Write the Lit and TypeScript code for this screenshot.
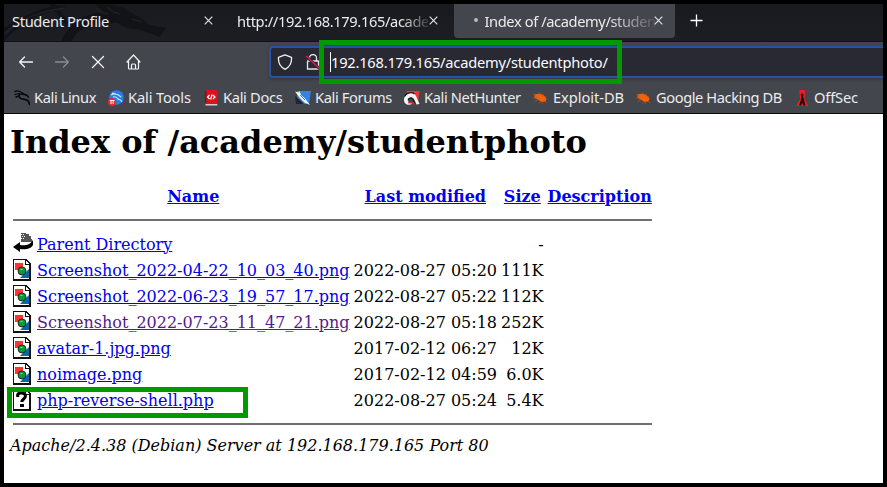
import { LitElement, html, svg, css } from "lit";
import { customElement } from "lit/decorators.js";

const cross = html`<svg class="x" width="9" height="9" viewBox="0 0 9 9"><path d="M.7.7l7.6 7.6M8.3.7L.7 8.3" stroke="#e8e8ea" stroke-width="1.1" fill="none"/></svg>`;

const back = (cls: string) => html`<svg class=${cls} width="16" height="16" viewBox="0 0 16 16"><path d="M14.500 8H1.600M6.500 3L1.600 8l4.900 5" fill="none" stroke="#f4f4f6" stroke-width="1.300" stroke-linecap="round" stroke-linejoin="round"/></svg>`;

const bug = svg`<g fill="#f0620e"><path d="M1.500 4.500l5-1 4 1.500 3 3.500-1 3-4 .5-4-2.500L1.500 8z"/><path d="M0 3.500l3 2M0 8l4-.5M1.500 11.500l4-2M6 13.500l1.500-2M7 2L6 5M10 3.500l-.5 3M13.500 6l-2 1M14 13l-2-2M9 14l.5-3" stroke="#b8521b" stroke-width=".7"/></g>`;

const marks: Record<string, unknown> = {
  linux: svg`<g fill="none" stroke="#08090b" stroke-linecap="round"><path d="M.5 1.500C4 0 7 1.700 9.500 3.700L13 5.500M1 4.500c3-1.500 5-.8 7.500 0" stroke-width="1.200"/><path d="M5.500 4c-1 4 1 5 4 5.200 3.500.2 5.500 1.600 6 5.300" stroke-width="1.700"/><path d="M8 4l4.500 1 2 2M2 7l3-1" stroke-width="1.500"/></g>`,
  tools: svg`<circle cx="8.500" cy="7.500" r="7.300" fill="#267df0"/><path d="M3 5c4-2 7-1 10 2M5 7c3-1 4 1 5 2s3 0 4 3M4 3l4 1" fill="none" stroke="#d9eaff" stroke-width="1.100"/><circle cx="4" cy="12" r="4" fill="#e82732"/><path d="M1.800 10.500h4.700M3 10.500v3.500M5.200 10.500v3.500" stroke="#fff" stroke-width="1"/>`,
  docs: svg`<path d="M3 0h11.300v15.500H2V1z" fill="#d9141a"/><path d="M2 1h1.500v12H2z" fill="#8d0c12"/><path d="M2.500 14H14.300v1.500H2.500z" fill="#ccc"/><path d="M6.500 5l-2 2 2 2M10 5l2 2-2 2M9 4.500L7.700 9.500" fill="none" stroke="#fff" stroke-width="1.200"/>`,
  forums: svg`<path d="M2 1h14l-2 13H3z" fill="#2f83ed"/><path d="M0 6l5 4 4 4H1z" fill="#23252b"/><path d="M0 1.500l3.500 1 1-1.500 1.500 4 4 3.500 5 6.500-5.500-2.500-5-5z" fill="#f4f7fc"/><path d="M5 5l5 5" stroke="#555" stroke-width=".8"/>`,
  hunter: svg`<path d="M2 1h13.500L14 13z" fill="#f0343a"/><path d="M0 10C0 3 9 0 12 6l3.500 8-3 .5L10 9C8 6 4 7 3.700 10c0 2 2.300 2.500 4.300 2v2c-4 2-8 0-8-4z" fill="#f4f4f4"/><path d="M.5 6.500C3 2 8 2 10.500 4M4 9.500c2-2 4-2 5 0l2.500 5" fill="none" stroke="#17181b" stroke-width="1.200"/><path d="M4.300 12.500c3 1 4-1 7 2" fill="none" stroke="#d82338" stroke-width="1.500"/>`,
  bug,
  offsec: svg`<path d="M5.300 0h6l-.8 9.500 3.800 6.500H2l4-6.500z" fill="#ed1d24"/><path d="M8.200 3.500c1.800 0 1.200 2 1 3.500l.8 3.500 1.500 5H9.200l-1-3-1 3H5l1.800-5L7.200 7c-.3-1.500-1-3.500 1-3.500z" fill="#1d0709"/>`,
};

const bookmarks: [string, string, number][] = [
  ["linux", "Kali Linux", -0.4], ["tools", "Kali Tools", -0.15], ["docs", "Kali Docs", -0.32], ["forums", "Kali Forums", -0.36],
  ["hunter", "Kali NetHunter", -0.37], ["bug", "Exploit-DB", -0.05], ["bug", "Google Hacking DB", -0.42], ["offsec", "OffSec", -0.15],
];

const page = svg`<g shape-rendering="crispEdges"><path d="M0 0h13l5 5v17H0z" fill="#111"/><path d="M1 1h11v5h4v14H1z" fill="#fff"/><path d="M13 2v3h3z" fill="#fff"/></g>`;
const fileIcons: Record<string, unknown> = {
  back: svg`<path d="M8 0h5v1h3v2h2v3h1v3H8z" fill="#555"/><path d="M8 1h1v1H8zM10 1h1v1h-1zM9 3h1v1H9zM11 3h1v1h-1zM8 5h1v1H8zM10 5h1v1h-1z" fill="#fff"/><path d="M0 14l7-5v3c5 1 10 0 13-5v5c-2 4-8 5-13 4v3z" fill="#000"/>`,
  image: svg`${page}<path d="M2 4h8v7H2z" fill="#f33"/><path d="M16 10v9H7z" fill="#0867aa"/><circle cx="9" cy="12" r="4" fill="#079b3a" stroke="#111" stroke-width=".8"/><path d="M7.500 10.500h2" stroke="#8fdf9f"/>`,
  unknown: svg`${page}<path d="M4.700 8V5.800C5.500 3.300 12.500 3.300 12.500 7c0 3-3.700 3-3.700 6" fill="none" stroke="#000" stroke-width="3"/><path d="M7 15h4v3H7z"/>`,
};

const files = [
  ["back", "Parent Directory", "", "-"],
  ["image", "Screenshot_2022-04-22_10_03_40.png", "2022-08-27 05:20", "111K"],
  ["image", "Screenshot_2022-06-23_19_57_17.png", "2022-08-27 05:22", "112K"],
  ["image", "Screenshot_2022-07-23_11_47_21.png", "2022-08-27 05:18", "252K"],
  ["image", "avatar-1.jpg.png", "2017-02-12 06:27", "12K"],
  ["image", "noimage.png", "2017-02-12 04:59", "6.0K"],
  ["unknown", "php-reverse-shell.php", "2022-08-27 05:24", "5.4K"],
];

@customElement("app-root")
export class AppRoot extends LitElement {
  static styles = css`
    :host { display: block; position: relative; box-sizing: border-box; width: 887px; height: 487px; border: 4px solid #000; background: #fff; overflow: hidden; font: 14.67px "Noto Sans", sans-serif; color: #ececee; }
    svg { display: block; flex: none; }
    .tabs { position: relative; display: flex; height: 37px; background: linear-gradient(#191a1f, #1d1e24); border-bottom: 1px solid #101115; }
    .dragon { position: absolute; left: 0; top: 0; }
    .tab { position: relative; box-sizing: border-box; width: 225px; height: 34px; padding: 0 16px 0 8px; display: flex; align-items: center; justify-content: space-between; }
    .tab.active { width: 221px; background: #44464d; border-radius: 0 0 4px 4px; padding: 0 12px 0 20px; }
    .x { margin-top: -2px; }
    .label { width: 191px; overflow: hidden; white-space: nowrap; line-height: 20px; letter-spacing: -.35px; margin-top: -1px; }
    .fade { letter-spacing: -.36px; mask-image: linear-gradient(90deg, #000 86%, rgb(0 0 0 / .15)); }
    .active .label { width: 170px; margin: -1px -1px 0 6px; letter-spacing: -.4px; mask-image: linear-gradient(90deg, #000 72%, rgb(0 0 0 / .1)); }
    .dot { width: 4px; height: 4px; flex: none; border-radius: 2px; background: #b9babd; margin-top: -2px; }
    .plus { margin: 10px 0 0 15px; }
    .nav { display: flex; height: 40px; background: #44464d; align-items: center; }
    .buttons { display: flex; width: 265px; box-sizing: border-box; padding-left: 14px; gap: 20px; align-items: center; }
    .dim { transform: scaleX(-1); opacity: .4; }
    .url { box-sizing: border-box; height: 32px; flex: 1; margin-right: -8px; border: 2px solid #2853a4; border-radius: 4px 0 0 4px; background: #282933; display: flex; align-items: center; padding-left: 6px; box-shadow: 0 1px 3px #303238; letter-spacing: -.22px; color: #fbfbfe; }
    .lock { margin-left: 12px; }
    .caret { width: 1px; height: 20px; background: #fff; margin-left: 9px; }
    .bookmarks { display: grid; grid-template-columns: 94px 95px 92px 109px 129px 103px 158px 1fr; padding-left: 10px; height: 31px; background: #44464d; border-bottom: 1px solid #08090c; }
    .bookmark { display: flex; align-items: center; gap: 4px; white-space: nowrap; }
    .bookmark svg { margin-top: 1px; }
    .bookmark span { margin-top: -1px; }
    .content { padding: 10px 6px; font: 16px "DejaVu Serif", serif; color: #000; }
    h1 { font-size: 32px; line-height: 37px; margin: 0 0 21px; }
    table { border-spacing: 2px; line-height: 19px; white-space: nowrap; }
    td, th { padding: 1px; }
    th, td.pic { height: 22px; }
    .pic svg { width: 20px; height: 22px; }
    .right { text-align: right; }
    hr { margin: 8px 0; height: 2px; border: 0; background: #707070; }
    a { color: #00e; text-decoration: underline; }
    a.visited { color: #551a8b; }
    address { font-style: italic; line-height: 19px; }
    .mark { position: absolute; box-sizing: border-box; border: 5px solid #009a00; }
    .mark.address { left: 315px; top: 36px; width: 303px; height: 44px; }
    .mark.file { left: 3px; top: 383px; width: 241px; height: 31px; }
  `;

  render() {
    return html`
      <div class="tabs">
        <svg class="dragon" width="190" height="37" viewBox="0 0 190 37"><g fill="#121317"><path d="M0 24Q28 6 50 2h14L48 7Q20 15 0 37v-4Q20 12 42 6 20 13 0 29z"/><path d="M45 0h6l15 19-4 3zM57 37q11-26 43-29l-9-8q29 0 37 9l10 5 7 7 17 3-6 9-19-7-14-2-9-5q-28-1-41 10l-6 8z"/></g><path d="M0 29q25-21 60-25M128 15l10 3M92 4q6 6 12 6M103 3q6 6 13 7" stroke="#24262b" fill="none"/></svg>
        <div class="tab"><span class="label">Student Profile</span>${cross}</div>
        <div class="tab"><span class="label fade">http://192.168.179.165/academy/</span>${cross}</div>
        <div class="tab active"><i class="dot"></i><span class="label fade">Index of /academy/studentphoto</span>${cross}</div>
        <svg class="plus" width="13" height="13" viewBox="0 0 13 13"><path d="M6.500.5v12M.5 6.500h12" stroke="#fff" stroke-width="1.300"/></svg>
      </div>
      <div class="nav">
        <div class="buttons">
          ${back("")}${back("dim")}
          <svg width="16" height="16" viewBox="0 0 16 16"><path d="M2.500 2.500l11 11M13.500 2.500l-11 11" stroke="#f4f4f6" stroke-width="1.300" stroke-linecap="round"/></svg>
          <svg width="16" height="16" viewBox="0 0 16 16"><path d="M1 8l6.500-7 6.500 7M2.500 7v7.200q0 .8.800.8h8.400q.8 0 .8-.8V7M5.500 15v-4q0-1 1-1h2q1 0 1 1v4" fill="none" stroke="#f4f4f6" stroke-width="1.200" stroke-linejoin="round" stroke-linecap="round"/></svg>
        </div>
        <div class="url">
          <svg width="16" height="16" viewBox="0 0 16 16"><path d="M8 .8l6.500 2.500c.5 6-2 9.700-6.500 12C3.500 13 1 9.300 1.500 3.300z" fill="none" stroke="#f1f1f3" stroke-width="1.300" stroke-linejoin="round"/></svg>
          <svg class="lock" width="16" height="16" viewBox="0 0 16 16"><path d="M4.500 7V4a3.500 3.500 0 017 0v3M3 7h10q.5 0 .5.500V15h-11V7.500Q2.500 7 3 7z" fill="none" stroke="#e8e8ea" stroke-width="1.300"/><path d="M1 2l14 13" stroke="#282933" stroke-width="3"/><path d="M1 2l14 13" stroke="#e21b4a" stroke-width="1.300"/></svg>
          <i class="caret"></i><span>192.168.179.165/academy/studentphoto/</span>
        </div>
      </div>
      <div class="bookmarks">${bookmarks.map(([icon, label, spacing]) => html`<div class="bookmark"><svg width="16" height="16" viewBox="0 0 16 16">${marks[icon]}</svg><span style="letter-spacing:${spacing}px">${label}</span></div>`)}</div>
      <div class="content">
        <h1>Index of /academy/studentphoto</h1>
        <table>
          <tr><th></th><th><a>Name</a></th><th><a>Last modified</a></th><th><a>Size</a></th><th><a>Description</a></th></tr>
          <tr><td colspan="5"><hr></td></tr>
          ${files.map(([icon, name, date, size]) => html`<tr><td class="pic"><svg viewBox="0 0 20 22">${fileIcons[icon]}</svg></td><td><a class=${name.includes("07-23") ? "visited" : ""}>${name}</a></td><td class="right">${date}</td><td class="right">${size}</td><td></td></tr>`)}
          <tr><td colspan="5"><hr></td></tr>
        </table>
        <address>Apache/2.4.38 (Debian) Server at 192.168.179.165 Port 80</address>
      </div>
      <div class="mark address"></div>
      <div class="mark file"></div>
    `;
  }
}
